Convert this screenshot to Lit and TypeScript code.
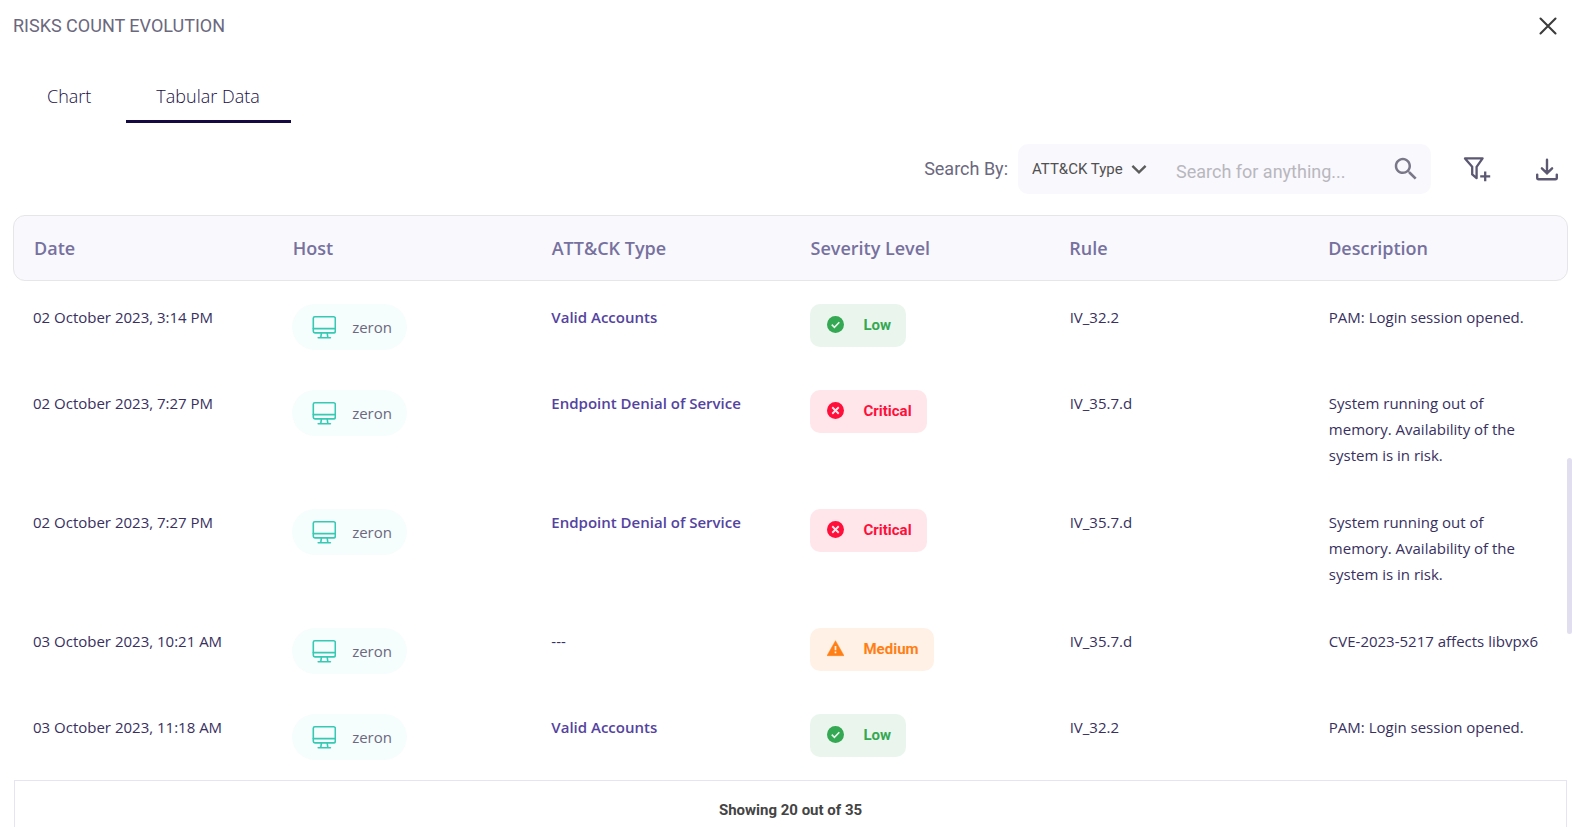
import { LitElement, html, css, svg } from "lit";
import { customElement, property, state } from "lit/decorators.js";
import { classMap } from "lit/directives/class-map.js";

type Severity = "low" | "medium" | "critical";

interface Risk {
  date: string;
  host: string;
  attack?: string;
  severity: Severity;
  rule: string;
  description: string;
}

const risks: Risk[] = [
  { date: "02 October 2023, 3:14 PM", host: "zeron", attack: "Valid Accounts", severity: "low", rule: "IV_32.2", description: "PAM: Login session opened." },
  { date: "02 October 2023, 7:27 PM", host: "zeron", attack: "Endpoint Denial of Service", severity: "critical", rule: "IV_35.7.d", description: "System running out of memory. Availability of the system is in risk." },
  { date: "02 October 2023, 7:27 PM", host: "zeron", attack: "Endpoint Denial of Service", severity: "critical", rule: "IV_35.7.d", description: "System running out of memory. Availability of the system is in risk." },
  { date: "03 October 2023, 10:21 AM", host: "zeron", severity: "medium", rule: "IV_35.7.d", description: "CVE-2023-5217 affects libvpx6" },
  { date: "03 October 2023, 11:18 AM", host: "zeron", attack: "Valid Accounts", severity: "low", rule: "IV_32.2", description: "PAM: Login session opened." },
];

const columns = ["Date", "Host", "ATT&CK Type", "Severity Level", "Rule", "Description"];

const severityIcons = {
  low: svg`<circle cx="10" cy="10" r="10" fill="currentColor"/><path d="M5.6 10.2l3.1 3.1 5.8-6" fill="none" stroke="#eaf6ed" stroke-width="1.9"/>`,
  critical: svg`<circle cx="10" cy="10" r="10" fill="currentColor"/><path d="M6.2 6.2l7.6 7.6M13.8 6.2l-7.6 7.6" fill="none" stroke="#ffe6ea" stroke-width="2.2"/>`,
  medium: svg`<path d="M10 .8L20 18.4H0z" fill="currentColor" stroke="currentColor" stroke-linejoin="round" stroke-width=".6"/><path d="M10 7.2v5M10 13.6v2.1" stroke="#fff1e6" stroke-width="2"/>`,
};

const severityLabels = { low: "Low", critical: "Critical", medium: "Medium" };

@customElement("severity-badge")
class SeverityBadge extends LitElement {
  @property() level: Severity = "low";

  static styles = css`
    :host { display: inline-block; vertical-align: top; }
    .badge {
      display: flex;
      align-items: center;
      gap: 19px;
      box-sizing: border-box;
      height: 43px;
      padding: 0 15px 2px 17px;
      border-radius: 10px;
      font: 700 15px/20px Roboto, sans-serif;
    }
    .icon { width: 17px; height: 17px; flex: none; }
    .low { color: #34a853; background: #eaf6ed; }
    .critical { color: #ff0f3a; background: #ffe6ea; }
    .medium { color: #ff7f15; background: #fff1e6; }
  `;

  render() {
    return html`<span class=${classMap({ badge: true, [this.level]: true })}>
      <svg class="icon" viewBox="0 0 20 20" aria-hidden="true">${severityIcons[this.level]}</svg>
      <span>${severityLabels[this.level]}</span>
    </span>`;
  }
}

@customElement("host-chip")
class HostChip extends LitElement {
  @property() name = "";

  static styles = css`
    :host { display: inline-block; vertical-align: top; }
    .chip {
      display: flex;
      align-items: center;
      gap: 16px;
      height: 46px;
      padding: 0 15px 0 20px;
      border-radius: 23px;
      background: #f6fdfd;
      color: #6b6980;
      font: 400 15px/20px "Open Sans", sans-serif;
    }
    .icon { width: 24px; height: 24px; flex: none; }
  `;

  render() {
    return html`<span class="chip">
      <svg class="icon" viewBox="0 0 24 24" fill="none" stroke="#36c9b4" stroke-width="1.6" stroke-linecap="round" aria-hidden="true">
        <rect x="1.3" y="1.7" width="22" height="16.2" rx="1.6"/>
        <path d="M1.3 13.6h22M9.4 18l-.6 4.4M15.2 18l.6 4.4M6.2 22.8h12.2"/>
      </svg>
      <span>${this.name}</span>
    </span>`;
  }
}

@customElement("app-root")
class AppRoot extends LitElement {
  @state() private tab = "Tabular Data";

  static styles = css`
    :host {
      display: block;
      position: relative;
      box-sizing: border-box;
      height: 100vh;
      overflow: hidden;
      background: #fff;
      color: #383060;
      font: 400 15px/26px "Open Sans", sans-serif;
    }
    button {
      padding: 0;
      border: 0;
      background: none;
      color: inherit;
      font: inherit;
      cursor: pointer;
    }
    svg { display: block; }
    .panel { padding: 0 5px 0 13px; overflow: hidden; }
    .head {
      display: flex;
      align-items: center;
      justify-content: space-between;
      height: 52px;
      padding-right: 4px;
    }
    .title { margin: 0; color: #6b687e; font: 400 18px/24px Roboto, sans-serif; }
    .close { color: #3c3c3c; }
    .tabs { display: flex; margin-top: 20px; }
    .tab {
      height: 51px;
      padding: 0 31px 0 30px;
      border-bottom: 3px solid transparent;
      color: #1a1046;
      font-size: 18px;
      font-weight: 300;
      line-height: 24px;
    }
    .tab:first-child { padding: 0 35px 0 34px; }
    .active { border-color: #150b42; }
    .tools {
      display: flex;
      align-items: center;
      justify-content: flex-end;
      margin-top: 21px;
      padding-right: 8px;
      font-family: Roboto, sans-serif;
    }
    .by { margin-right: 10px; color: #6b687e; font-size: 18px; }
    .search {
      display: flex;
      align-items: center;
      width: 413px;
      height: 50px;
      border-radius: 10px;
      background: #f9f8fd;
    }
    .pick { display: flex; align-items: center; position: relative; }
    .select {
      width: 144px;
      height: 50px;
      padding: 0 30px 0 14px;
      border: 0;
      background: none;
      appearance: none;
      color: #505050;
      font: 400 15px/24px Roboto, sans-serif;
    }
    .chevron { position: absolute; right: 15px; pointer-events: none; }
    .input {
      flex: 1;
      min-width: 0;
      height: 50px;
      box-sizing: border-box;
      padding: 5px 0 0 14px;
      border: 0;
      background: none;
      outline: 0;
      color: #444;
      font: 400 18px/24px Roboto, sans-serif;
    }
    .input::placeholder { color: #b8b7bd; opacity: 1; }
    .find { margin-right: 10px; color: #7a7788; }
    .tool { color: #5d5872; }
    .filter { margin: 0 44px 0 30px; }
    .table { display: block; width: calc(100% + 1px); margin-top: 21px; }
    thead { display: block; }
    tbody { display: block; padding-top: 3px; }
    tr { display: grid; grid-template-columns: repeat(6, minmax(0, 1fr)); }
    .labels {
      box-sizing: border-box;
      height: 66px;
      align-items: center;
      border: 1px solid #e6e6e8;
      border-radius: 12px;
      background: #f9f8fd;
    }
    th {
      padding: 0 20px;
      text-align: left;
      color: #76719f;
      font-size: 18px;
      font-weight: 600;
      line-height: 24px;
    }
    td { padding: 20px; }
    .description { padding-bottom: 21px; }
    .attack { color: #5443a0; font-weight: 600; text-decoration: none; }
    .foot {
      height: 56px;
      margin-left: 1px;
      border: 1px solid #e6e4f2;
      text-align: center;
      color: #444;
      font: 700 15px/58px Roboto, sans-serif;
    }
    .thumb {
      position: absolute;
      right: 0;
      top: 55.4%;
      width: 5px;
      height: 21.3%;
      border-radius: 3px;
      background: #e1dfef;
    }
  `;

  private renderRow(r: Risk) {
    return html`<tr>
      <td>${r.date}</td>
      <td><host-chip name=${r.host}></host-chip></td>
      <td>${r.attack ? html`<a class="attack" href="#">${r.attack}</a>` : "---"}</td>
      <td><severity-badge level=${r.severity}></severity-badge></td>
      <td>${r.rule}</td>
      <td class="description">${r.description}</td>
    </tr>`;
  }

  render() {
    return html`
      <main class="panel">
        <header class="head">
          <h1 class="title">RISKS COUNT EVOLUTION</h1>
          <button class="close" aria-label="Close">
            <svg width="30" height="30" viewBox="0 0 30 30" fill="none" stroke="currentColor" stroke-width="2.1" stroke-linecap="round"><path d="M7.5 7.5l15 15M22.5 7.5l-15 15"/></svg>
          </button>
        </header>
        <nav class="tabs" role="tablist">
          ${["Chart", "Tabular Data"].map(
            (t) => html`<button
              role="tab"
              aria-selected=${this.tab === t ? "true" : "false"}
              class=${classMap({ tab: true, active: this.tab === t })}
              @click=${() => (this.tab = t)}
            >${t}</button>`
          )}
        </nav>
        <div class="tools">
          <label class="by" for="field">Search By:</label>
          <div class="search">
            <div class="pick">
              <select class="select" id="field">
                <option>ATT&amp;CK Type</option>
              </select>
              <svg class="chevron" width="16" height="16" viewBox="0 0 16 16" fill="none" stroke="#5c5c5c" stroke-width="2.4"><path d="M1.4 4.8L8 11.4l6.6-6.6"/></svg>
            </div>
            <input class="input" type="text" aria-label="Search" placeholder="Search for anything..." />
            <button class="find" aria-label="Search">
              <svg width="30" height="30" viewBox="0 0 24 24" fill="currentColor"><path d="M15.5 14h-.79l-.28-.27C15.41 12.59 16 11.11 16 9.5 16 5.91 13.09 3 9.5 3S3 5.91 3 9.5 5.91 16 9.5 16c1.61 0 3.09-.59 4.23-1.57l.27.28v.79l5 4.99L20.49 19l-4.99-5zm-6 0C7.01 14 5 11.99 5 9.5S7.01 5 9.5 5 14 7.01 14 9.5 11.99 14 9.5 14z"/></svg>
            </button>
          </div>
          <button class="tool filter" aria-label="Add filter">
            <svg width="30" height="30" viewBox="0 0 30 30" fill="none" stroke="currentColor" stroke-width="2.3" stroke-linejoin="round"><path d="M4 4.4h17.6l-6 8.4v11.4l-4.4-3.8v-7.6z"/><path d="M24.2 17.4v9.8M19.2 22.3h10"/></svg>
          </button>
          <button class="tool" aria-label="Download">
            <svg width="24" height="24" viewBox="0 0 24 24" fill="none" stroke="currentColor" stroke-width="2.4" stroke-linecap="round"><path d="M12 2.8v13M6.9 11.3l5.1 5 5.1-5M2.2 17.6v3.2q0 1.4 1.4 1.4h16.8q1.4 0 1.4-1.4v-3.2"/></svg>
          </button>
        </div>
        <table class="table">
          <thead>
            <tr class="labels">${columns.map((c) => html`<th scope="col">${c}</th>`)}</tr>
          </thead>
          <tbody>${risks.map((r) => this.renderRow(r))}</tbody>
        </table>
        <footer class="foot">Showing 20 out of 35</footer>
      </main>
      <div class="thumb"></div>
    `;
  }
}
